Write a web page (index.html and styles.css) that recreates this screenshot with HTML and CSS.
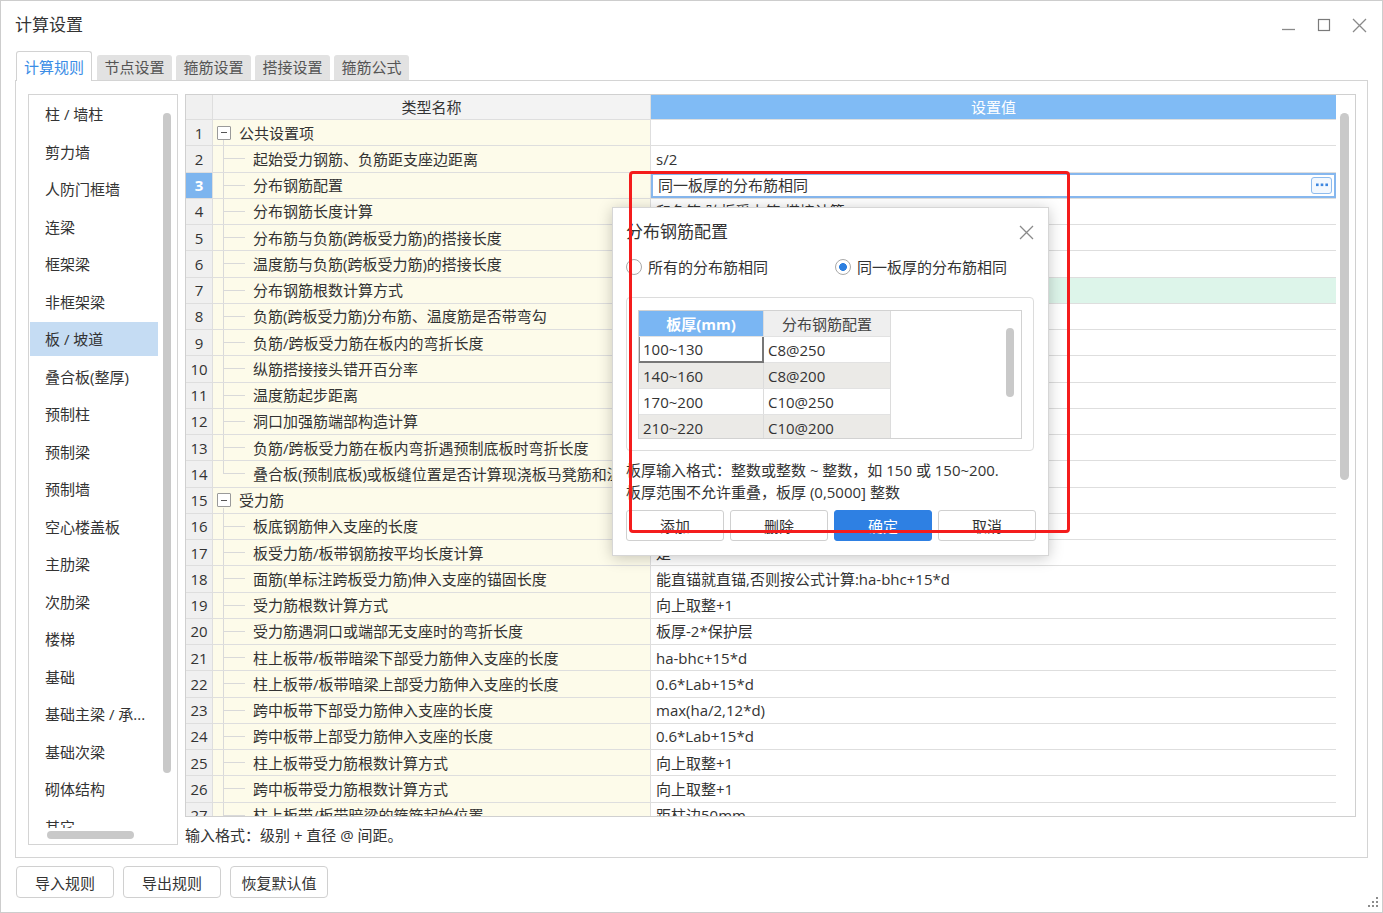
FILE: index.html
```html
<!DOCTYPE html>
<html lang="zh-CN">
<head>
<meta charset="utf-8">
<title>计算设置</title>
<link rel="stylesheet" href="styles.css">
</head>
<body>
<div class="window">
  <div class="titlebar">
    <div class="title">计算设置</div>
    <div class="winctl">
      <svg width="15" height="15" viewBox="0 0 15 15"><path d="M0 11.5h13" stroke="#8a8a8a" stroke-width="1.3"/></svg>
      <svg width="15" height="15" viewBox="0 0 15 15"><rect x="1.5" y="1.5" width="11" height="11" fill="none" stroke="#7a7a7a" stroke-width="1.2"/></svg>
      <svg width="15" height="15" viewBox="0 0 15 15"><path d="M1 1L14 14M14 1L1 14" stroke="#8a8a8a" stroke-width="1.3"/></svg>
    </div>
  </div>

  <div class="tabs">
    <div class="tab active">计算规则</div>
    <div class="tab">节点设置</div>
    <div class="tab">箍筋设置</div>
    <div class="tab">搭接设置</div>
    <div class="tab">箍筋公式</div>
  </div>

  <div class="panel">
    <div class="sidebar">
      <div class="side-body">
        <ul class="side-list">
          <li>柱 / 墙柱</li>
          <li>剪力墙</li>
          <li>人防门框墙</li>
          <li>连梁</li>
          <li>框架梁</li>
          <li>非框架梁</li>
          <li class="sel">板 / 坡道</li>
          <li>叠合板(整厚)</li>
          <li>预制柱</li>
          <li>预制梁</li>
          <li>预制墙</li>
          <li>空心楼盖板</li>
          <li>主肋梁</li>
          <li>次肋梁</li>
          <li>楼梯</li>
          <li>基础</li>
          <li>基础主梁 / 承...</li>
          <li>基础次梁</li>
          <li>砌体结构</li>
          <li>其它</li>
        </ul>
        <div class="vtrack"><div class="vthumb"></div></div>
      </div>
      <div class="htrack"><div class="hthumb"></div></div>
    </div>

    <div class="main">
      <div class="grid">
        <div class="cols">
          <div class="row head"><div class="c num"></div><div class="c name">类型名称</div><div class="c val">设置值</div></div>
          <div class="row"><div class="c num">1</div><div class="c name grp open"><span class="tog"></span>公共设置项</div><div class="c val"></div></div>
          <div class="row"><div class="c num">2</div><div class="c name"><span class="tree"></span>起始受力钢筋、负筋距支座边距离</div><div class="c val">s/2</div></div>
          <div class="row"><div class="c num cur">3</div><div class="c name"><span class="tree"></span>分布钢筋配置</div><div class="c val edit"><span>同一板厚的分布筋相同</span><span class="more"><svg width="12" height="4" viewBox="0 0 12 4"><rect x="0" y="0.5" width="2.6" height="2.6" fill="#3c86df"/><rect x="4.7" y="0.5" width="2.6" height="2.6" fill="#3c86df"/><rect x="9.4" y="0.5" width="2.6" height="2.6" fill="#3c86df"/></svg></span></div></div>
          <div class="row"><div class="c num">4</div><div class="c name"><span class="tree"></span>分布钢筋长度计算</div><div class="c val">和负筋(跨板受力筋)搭接计算</div></div>
          <div class="row"><div class="c num">5</div><div class="c name"><span class="tree"></span>分布筋与负筋(跨板受力筋)的搭接长度</div><div class="c val">150</div></div>
          <div class="row"><div class="c num">6</div><div class="c name"><span class="tree"></span>温度筋与负筋(跨板受力筋)的搭接长度</div><div class="c val">ll</div></div>
          <div class="row"><div class="c num">7</div><div class="c name"><span class="tree"></span>分布钢筋根数计算方式</div><div class="c val hover">向下取整+1</div></div>
          <div class="row"><div class="c num">8</div><div class="c name"><span class="tree"></span>负筋(跨板受力筋)分布筋、温度筋是否带弯勾</div><div class="c val">否</div></div>
          <div class="row"><div class="c num">9</div><div class="c name"><span class="tree"></span>负筋/跨板受力筋在板内的弯折长度</div><div class="c val">板厚-2*保护层</div></div>
          <div class="row"><div class="c num">10</div><div class="c name"><span class="tree"></span>纵筋搭接接头错开百分率</div><div class="c val">50%</div></div>
          <div class="row"><div class="c num">11</div><div class="c name"><span class="tree"></span>温度筋起步距离</div><div class="c val">s</div></div>
          <div class="row"><div class="c num">12</div><div class="c name"><span class="tree"></span>洞口加强筋端部构造计算</div><div class="c val">按平法图集计算</div></div>
          <div class="row"><div class="c num">13</div><div class="c name"><span class="tree"></span>负筋/跨板受力筋在板内弯折遇预制底板时弯折长度</div><div class="c val">到叠合板顶</div></div>
          <div class="row"><div class="c num">14</div><div class="c name"><span class="tree last"></span>叠合板(预制底板)或板缝位置是否计算现浇板马凳筋和温度筋</div><div class="c val">是</div></div>
          <div class="row"><div class="c num">15</div><div class="c name grp open"><span class="tog"></span>受力筋</div><div class="c val"></div></div>
          <div class="row"><div class="c num">16</div><div class="c name"><span class="tree"></span>板底钢筋伸入支座的长度</div><div class="c val">max(ha/2,5*d)</div></div>
          <div class="row"><div class="c num">17</div><div class="c name"><span class="tree"></span>板受力筋/板带钢筋按平均长度计算</div><div class="c val">是</div></div>
          <div class="row"><div class="c num">18</div><div class="c name"><span class="tree"></span>面筋(单标注跨板受力筋)伸入支座的锚固长度</div><div class="c val">能直锚就直锚,否则按公式计算:ha-bhc+15*d</div></div>
          <div class="row"><div class="c num">19</div><div class="c name"><span class="tree"></span>受力筋根数计算方式</div><div class="c val">向上取整+1</div></div>
          <div class="row"><div class="c num">20</div><div class="c name"><span class="tree"></span>受力筋遇洞口或端部无支座时的弯折长度</div><div class="c val">板厚-2*保护层</div></div>
          <div class="row"><div class="c num">21</div><div class="c name"><span class="tree"></span>柱上板带/板带暗梁下部受力筋伸入支座的长度</div><div class="c val">ha-bhc+15*d</div></div>
          <div class="row"><div class="c num">22</div><div class="c name"><span class="tree"></span>柱上板带/板带暗梁上部受力筋伸入支座的长度</div><div class="c val">0.6*Lab+15*d</div></div>
          <div class="row"><div class="c num">23</div><div class="c name"><span class="tree"></span>跨中板带下部受力筋伸入支座的长度</div><div class="c val">max(ha/2,12*d)</div></div>
          <div class="row"><div class="c num">24</div><div class="c name"><span class="tree"></span>跨中板带上部受力筋伸入支座的长度</div><div class="c val">0.6*Lab+15*d</div></div>
          <div class="row"><div class="c num">25</div><div class="c name"><span class="tree"></span>柱上板带受力筋根数计算方式</div><div class="c val">向上取整+1</div></div>
          <div class="row"><div class="c num">26</div><div class="c name"><span class="tree"></span>跨中板带受力筋根数计算方式</div><div class="c val">向上取整+1</div></div>
          <div class="row"><div class="c num">27</div><div class="c name"><span class="tree"></span>柱上板带/板带暗梁的箍筋起始位置</div><div class="c val">距柱边50mm</div></div>
        </div>
        <div class="gtrack"><div class="gthumb"></div></div>
      </div>
      <div class="hint">输入格式：级别 + 直径 @ 间距。</div>
    </div>
  </div>

  <div class="footer">
    <div class="btn">导入规则</div>
    <div class="btn">导出规则</div>
    <div class="btn">恢复默认值</div>
  </div>

  <svg class="grip" width="10" height="10" viewBox="0 0 10 10">
    <rect x="8" y="0" width="2" height="2" fill="#8c8c8c"/>
    <rect x="4" y="4" width="2" height="2" fill="#8c8c8c"/>
    <rect x="8" y="4" width="2" height="2" fill="#8c8c8c"/>
    <rect x="0" y="8" width="2" height="2" fill="#8c8c8c"/>
    <rect x="4" y="8" width="2" height="2" fill="#8c8c8c"/>
    <rect x="8" y="8" width="2" height="2" fill="#8c8c8c"/>
  </svg>

  <div class="dialog">
    <div class="dlg-title">
      <span>分布钢筋配置</span>
      <svg width="15" height="15" viewBox="0 0 15 15"><path d="M1 1L14 14M14 1L1 14" stroke="#8a8a8a" stroke-width="1.3"/></svg>
    </div>
    <div class="radios">
      <div class="radio-item"><span class="radio"></span>所有的分布筋相同</div>
      <div class="radio-item second"><span class="radio on"></span>同一板厚的分布筋相同</div>
    </div>
    <div class="dlg-box">
      <div class="dtable">
        <div class="dcols">
          <div class="drow dhead"><div class="dc dh1">板厚(mm)</div><div class="dc dh2">分布钢筋配置</div></div>
          <div class="drow"><div class="dc focus">100~130</div><div class="dc">C8@250</div></div>
          <div class="drow alt"><div class="dc">140~160</div><div class="dc">C8@200</div></div>
          <div class="drow"><div class="dc">170~200</div><div class="dc">C10@250</div></div>
          <div class="drow alt"><div class="dc">210~220</div><div class="dc">C10@200</div></div>
        </div>
        <div class="dscroll"><div class="dthumb"></div></div>
      </div>
    </div>
    <div class="dlg-help">板厚输入格式：整数或整数 ~ 整数，如 150 或 150~200.<br>板厚范围不允许重叠，板厚 (0,5000] 整数</div>
    <div class="dlg-btns">
      <div class="dbtn">添加</div>
      <div class="dbtn">删除</div>
      <div class="dbtn primary">确定</div>
      <div class="dbtn">取消</div>
    </div>
  </div>

  <div class="redbox"></div>
</div>
</body>
</html>
```

FILE: styles.css
```css
* { box-sizing: border-box; }
html, body { margin: 0; padding: 0; background: #fff; }
body {
  font-family: "Open Sans", "Noto Sans CJK SC", "Microsoft YaHei", sans-serif;
  font-size: 15px;
  color: #333;
}

.window {
  position: relative;
  width: 1383px;
  height: 913px;
  border: 1px solid #cdcdcd;
  background: #fff;
  overflow: hidden;
}

/* title bar */
.titlebar {
  height: 50px;
  display: flex;
  align-items: center;
  justify-content: space-between;
  padding: 0 15px 2px 14px;
}
.title { font-size: 17px; line-height: 22px; color: #333; }
.winctl { display: flex; align-items: center; gap: 20px; }
.winctl svg { display: block; }

/* tabs */
.tabs {
  display: flex;
  align-items: flex-end;
  height: 29px;
  padding-left: 15px;
}
.tab {
  width: 75px;
  height: 25px;
  margin-left: 4px;
  background: #e2e2e2;
  border-radius: 3px 3px 0 0;
  color: #555;
  line-height: 25px;
  text-align: center;
}
.tab.active {
  width: 76px;
  height: 30px;
  margin: 0 1px -1px 0;
  background: #fff;
  border: 1px solid #d2d2d2;
  border-bottom: none;
  color: #3b8de6;
  line-height: 30px;
  position: relative;
  z-index: 1;
}

/* panel */
.panel {
  margin: 0 14px;
  height: 778px;
  border: 1px solid #d4d4d4;
  padding: 13px 11px 0 12px;
  display: flex;
  gap: 7px;
}

/* sidebar */
.sidebar {
  width: 150px;
  flex: none;
  height: 751px;
  border: 1px solid #d4d4d4;
  display: flex;
  flex-direction: column;
}
.side-body { flex: 1; min-height: 0; display: flex; overflow: hidden; }
.side-list {
  list-style: none;
  margin: 0;
  padding: 2px 0 0 1px;
  width: 129px;
  flex: none;
}
.side-list li {
  height: 34px;
  line-height: 34px;
  margin-bottom: 3.5px;
  padding-left: 15px;
  white-space: nowrap;
  color: #333;
}
.side-list li.sel { background: #c5dcf3; }
.vtrack { flex: 1; }
.vthumb {
  margin: 18px 0 0 5px;
  width: 8px;
  height: 660px;
  border-radius: 4px;
  background: #c9c9c9;
}
.htrack { height: 16px; flex: none; }
.hthumb {
  margin: 3px 0 0 18px;
  width: 87px;
  height: 8px;
  border-radius: 4px;
  background: #c9c9c9;
}

/* main grid */
.main { width: 1171px; flex: none; display: flex; flex-direction: column; }
.grid {
  height: 723px;
  border: 1px solid #d0d0d0;
  display: flex;
}
.cols { width: 1150px; flex: none; overflow: hidden; }
.gtrack { flex: 1; }
.gthumb {
  margin: 18px 0 0 4px;
  width: 9px;
  height: 367px;
  border-radius: 4.5px;
  background: #c9c9c9;
}
.row {
  display: flex;
  height: 26.25px;
  border-bottom: 1px solid #dedede;
}
.row.head { height: 25px; }
.c {
  display: flex;
  align-items: center;
  white-space: nowrap;
  overflow: hidden;
  line-height: 20px;
  border-right: 1px solid #dedede;
}
.num {
  width: 27px;
  justify-content: center;
  background: #f0f0f0;
  color: #333;
}
.num.cur { background: #7db5ef; color: #fff; font-weight: bold; }
.name {
  width: 438px;
  background: #fdfbea;
}
.val {
  width: 685px;
  padding-left: 5px;
  background: #fff;
  border-right: none;
}
.head .name { justify-content: center; background: #f3f3f3; }
.head .val { justify-content: center; padding-left: 0; background: #80bbf5; color: #fff; }
.val.hover { background: #ddf5ea; }
.val.edit {
  box-shadow: inset 0 0 0 2px #86b7ee;
  padding-left: 7px;
  padding-right: 4px;
}
.more {
  margin-left: auto;
  width: 21px;
  height: 17px;
  border: 1.5px solid #8dbbee;
  border-radius: 3px;
  background: #f3f8fe;
  display: flex;
  align-items: center;
  justify-content: center;
}
.more svg { display: block; }

/* tree */
.tree {
  flex: none;
  align-self: stretch;
  width: 40px;
  background-image: linear-gradient(#d9d9d9, #d9d9d9), linear-gradient(#d9d9d9, #d9d9d9);
  background-size: 1px 100%, 22px 1px;
  background-position: 10px 0, 10px 50%;
  background-repeat: no-repeat;
}
.tree.last { background-size: 1px 50%, 22px 1px; }
.name.grp.open {
  background-image: linear-gradient(#d9d9d9, #d9d9d9);
  background-size: 1px 20%;
  background-position: 10px 100%;
  background-repeat: no-repeat;
}
.tog {
  flex: none;
  width: 14px;
  height: 14px;
  margin: 0 8px 0 4px;
  border: 1px solid #9a9a9a;
  border-radius: 1px;
  background-color: #fff;
  background-image: linear-gradient(#555, #555);
  background-size: 6px 1px;
  background-position: center;
  background-repeat: no-repeat;
}

.hint { margin-top: 7px; line-height: 22px; }

/* footer */
.footer {
  display: flex;
  gap: 9px;
  padding: 8px 0 0 15px;
}
.btn {
  width: 98px;
  height: 32px;
  border: 1px solid #d0d0d0;
  border-radius: 4px;
  background: #fff;
  display: flex;
  align-items: center;
  justify-content: center;
  color: #333;
}

.grip { position: absolute; right: 4px; bottom: 5px; display: block; }

/* dialog */
.dialog {
  position: absolute;
  left: 611px;
  top: 206px;
  width: 437px;
  height: 349px;
  background: #fff;
  border: 1px solid #d6d6d6;
  box-shadow: 0 2px 14px rgba(0, 0, 0, 0.22);
  padding: 13px 13px 0 13px;
  z-index: 5;
}
.dlg-title {
  display: flex;
  align-items: center;
  justify-content: space-between;
  height: 22px;
  font-size: 17px;
  line-height: 22px;
  color: #333;
}
.dlg-title svg { display: block; margin-right: 1px; }
.radios {
  margin-top: 13px;
  height: 22px;
  display: flex;
  align-items: center;
}
.radio-item { display: flex; align-items: center; line-height: 22px; }
.radio-item.second { margin-left: 67px; }
.radio {
  width: 16px;
  height: 16px;
  border: 1px solid #a8a8a8;
  border-radius: 50%;
  margin-right: 6px;
  background: #fff;
  flex: none;
}
.radio.on {
  background: radial-gradient(circle, #2c7fe0 0 3.6px, #fff 4.2px);
}
.dlg-box {
  margin-top: 19px;
  width: 408px;
  height: 154px;
  border: 1px solid #dcdcdc;
  border-radius: 4px;
  padding: 12px 11px 0 11px;
}
.dtable {
  width: 384px;
  height: 129px;
  border: 1px solid #d2d2d2;
  display: flex;
  overflow: hidden;
}
.dcols {
  width: 252px;
  flex: none;
  border-right: 1px solid #dcdcdc;
}
.drow { display: flex; height: 26px; border-bottom: 1px solid #e2e2e2; }
.drow.dhead { height: 26px; }
.drow.alt { background: #ebeae7; }
.dc {
  width: 125px;
  flex: none;
  padding-left: 4px;
  display: flex;
  align-items: center;
  border-right: 1px solid #dcdcdc;
  line-height: 20px;
  white-space: nowrap;
}
.dc + .dc { width: 126px; border-right: none; }
.dc.dh1 { justify-content: center; padding-left: 0; background: #7ab6f3; color: #fff; font-weight: bold; }
.dc.dh2 { justify-content: center; padding-left: 0; background: #efefef; color: #444; }
.dc.focus {
  border-left: 1px solid #8a8a8a;
  border-right: 2px solid #777;
  border-bottom: 2px solid #777;
  padding-left: 3px;
  margin-bottom: -1px;
}
.dscroll { flex: 1; }
.dthumb {
  margin: 17px 0 0 115px;
  width: 8px;
  height: 69px;
  border-radius: 4px;
  background: #c9c9c9;
}
.dlg-help { margin-top: 8px; line-height: 22px; color: #333; white-space: nowrap; }
.dlg-btns {
  margin-top: 7px;
  margin-right: -2px;
  display: grid;
  grid-template-columns: repeat(4, 98px);
  gap: 6px;
}
.dbtn {
  height: 31px;
  border: 1px solid #d0d0d0;
  border-radius: 3px;
  background: #fff;
  display: flex;
  align-items: center;
  justify-content: center;
  color: #333;
}
.dbtn.primary { background: #2e80e3; border-color: #2e80e3; color: #fff; }

.redbox {
  position: absolute;
  left: 628px;
  top: 170px;
  width: 441px;
  height: 362px;
  border: 3px solid #f41c1c;
  border-radius: 4px;
  z-index: 6;
}
```
